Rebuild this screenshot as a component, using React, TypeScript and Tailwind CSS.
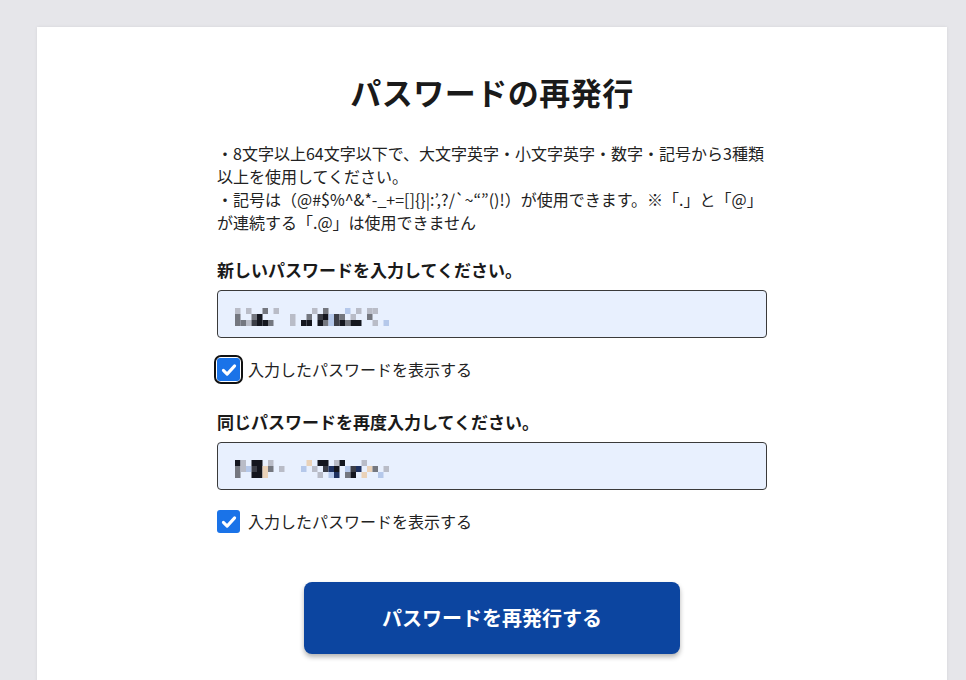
import { useState } from 'react';

const FONT = '"Noto Sans CJK JP", "Noto Sans", sans-serif';

// mosaic rows for the masked password values (pixelated blocks)
const SHADES: Record<string, string> = {
  l: '#b9bcc7',
  m: '#74777f',
  d: '#3c3e47',
  k: '#14161e',
  b: '#b5c8ea',
  o: '#ead2b8',
  n: '#1f3260',
};

const MOSAIC_A = [
  'l.l..m.l......l.m...b.l.ll..',
  'm..mk.....l..m.dkbdm.l..m...',
  'mmldkkm...l.kk.kmbdkmkk..l.b',
];
const MOSAIC_B = [
  'kl.kk.l......o.kk.lk...l...',
  'mlbdkom.l...b.l.dnk.bdn.om.l',
  'm..kko.........l.bn.mk.o..b.',
];

function Mosaic({ rows }: { rows: string[] }) {
  return (
    <svg width="160" height="18" viewBox="0 0 160 18" className="mt-[6px]">
      {rows.map((row, y) =>
        row.split('').map((c, x) =>
          c === '.' ? null : (
            <rect key={`${x}-${y}`} x={x * 5.5} y={y * 6} width="5.5" height="6" fill={SHADES[c]} />
          )
        )
      )}
    </svg>
  );
}

function CheckBox({ checked, focused, onToggle }: { checked: boolean; focused?: boolean; onToggle: () => void }) {
  return (
    <button
      type="button"
      onClick={onToggle}
      className={`flex items-center justify-center rounded-[4px] ${focused ? 'outline outline-2 outline-[#111] outline-offset-[1px]' : ''}`}
    >
      <span
        className={`flex items-center justify-center w-[23px] h-[23px] rounded-[3px] ${checked ? 'bg-[#1a73e8]' : 'bg-white border border-[#666]'}`}
      >
        {checked && (
          <svg width="18" height="18" viewBox="0 0 24 24" fill="none" stroke="white" strokeWidth="4" strokeLinecap="round" strokeLinejoin="round">
            <path d="M4.5 12.5l5 5L19.5 6.5" />
          </svg>
        )}
      </span>
    </button>
  );
}

function PasswordField({ label, mosaic, focused }: { label: string; mosaic: string[]; focused?: boolean }) {
  const [show, setShow] = useState(true);
  return (
    <div>
      <p className="text-[17px] font-bold text-[#1a1a1a] leading-[24px]">{label}</p>
      <div className="mt-[8px] h-[48px] rounded-[4px] border border-[#3a3a3a] bg-[#e8f0fe] flex items-center pl-[17px]">
        <Mosaic rows={show ? mosaic : mosaic.map((r) => r.replace(/[a-z]/g, 'd'))} />
      </div>
      <label className="mt-[18px] flex items-center gap-[8px] text-[16px] text-[#222] leading-[27px]">
        <CheckBox checked={show} focused={focused} onToggle={() => setShow(!show)} />
        入力したパスワードを表示する
      </label>
    </div>
  );
}

export default function App() {
  return (
    <div className="min-h-[680px] bg-[#e6e6ea] pt-[27px] pl-[37px] pr-[19px] overflow-hidden" style={{ fontFamily: FONT }}>
      <div className="bg-white h-[660px] shadow-[0_0_3px_rgba(0,0,0,0.08)]">
        <div className="w-[550px] mx-auto pt-[45px]">
          <h1 className="text-center text-[31px] font-bold text-[#1a1a1a] leading-[40px] tracking-[0.5px]">
            パスワードの再発行
          </h1>
          <div className="mt-[30px] text-[16px] leading-[23px] text-[#222] whitespace-nowrap">
            <p>・8文字以上64文字以下で、大文字英字・小文字英字・数字・記号から3種類</p>
            <p>以上を使用してください。</p>
            <p>・記号は（@#$%^&amp;*-_+=[]{'{}'}|:’,?/`~“”()!）が使用できます。※「.」と「@」</p>
            <p>が連続する「.@」は使用できません</p>
          </div>
          <div className="mt-[24px] flex flex-col gap-[27px]">
            <PasswordField label="新しいパスワードを入力してください。" mosaic={MOSAIC_A} focused />
            <PasswordField label="同じパスワードを再度入力してください。" mosaic={MOSAIC_B} />
          </div>
          <div className="mt-[47px] flex justify-center">
            <button
              type="button"
              className="w-[376px] h-[72px] rounded-[8px] bg-[#0c45a0] text-white text-[20px] font-bold shadow-[0_3px_5px_rgba(0,0,0,0.3)]"
            >
              パスワードを再発行する
            </button>
          </div>
        </div>
      </div>
    </div>
  );
}
